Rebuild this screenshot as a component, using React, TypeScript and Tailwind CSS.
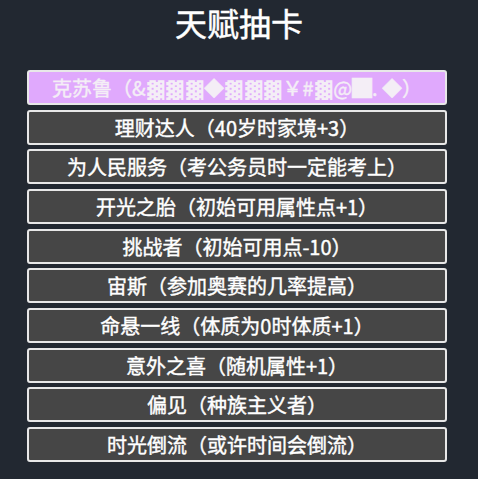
import React from "react";

const items = [
  "理财达人（40岁时家境+3）",
  "为人民服务（考公务员时一定能考上）",
  "开光之胎（初始可用属性点+1）",
  "挑战者（初始可用点-10）",
  "宙斯（参加奥赛的几率提高）",
  "命悬一线（体质为0时体质+1）",
  "意外之喜（随机属性+1）",
  "偏见（种族主义者）",
  "时光倒流（或许时间会倒流）",
];

const Shade = ({ n }: { n: number }) => (
  <>
    {Array.from({ length: n }).map((_, i) => (
      <span
        key={i}
        className="inline-block w-[19.5px] text-center font-['DejaVu_Sans',sans-serif] text-[17px] scale-x-[1.3] [-webkit-text-stroke:0px]"
      >
        ▓
      </span>
    ))}
  </>
);

export default function App() {
  return (
    <div
      className="w-[478px] h-[479px] bg-[#222831] text-white overflow-hidden"
      style={{ fontFamily: '"Microsoft YaHei", "Noto Sans CJK SC", "Noto Sans", sans-serif' }}
    >
      <h1 className="text-[32px] leading-[44px] text-center pt-0 text-white [-webkit-text-stroke:0.5px_white]">天赋抽卡</h1>
      <ul className="mt-[26px] flex flex-col gap-[4.67px] px-[27px] w-[474px]">
        <li className="h-[35px] rounded-[3px] border-2 border-[#e8e8e8] bg-[#e0a9fd] text-[#f4eef6] text-[20px] leading-[31px] text-center whitespace-nowrap [-webkit-text-stroke:0.4px_#f4eef6]">
          克苏鲁（&amp;<Shade n={3} />◆<Shade n={3} />￥#<Shade n={1} />@█.&nbsp;◆）
        </li>
        {items.map((t) => (
          <li
            key={t}
            className="h-[35px] rounded-[3px] border-2 border-[#e8e8e8] bg-[#464646] text-white text-[20px] leading-[31px] text-center whitespace-nowrap [-webkit-text-stroke:0.4px_white]"
          >
            {t}
          </li>
        ))}
      </ul>
    </div>
  );
}
